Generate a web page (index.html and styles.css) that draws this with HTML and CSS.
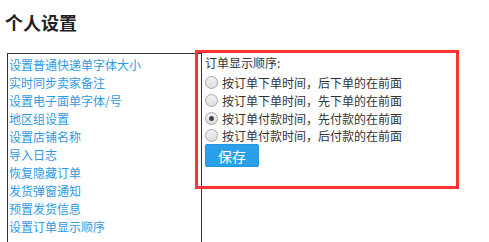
FILE: index.html
```html
<!DOCTYPE html>
<html lang="zh-CN">
<head>
    <meta charset="UTF-8">
    <title>个人设置</title>
    <link rel="stylesheet" href="styles.css">
</head>
<body>
    <div class="page">
        <h2 class="page-title">个人设置</h2>
        <div class="main">
            <!-- Settings menu -->
            <ul class="menu">
                <li><a href="#">设置普通快递单字体大小</a></li>
                <li><a href="#">实时同步卖家备注</a></li>
                <li><a href="#">设置电子面单字体/号</a></li>
                <li><a href="#">地区组设置</a></li>
                <li><a href="#">设置店铺名称</a></li>
                <li><a href="#">导入日志</a></li>
                <li><a href="#">恢复隐藏订单</a></li>
                <li><a href="#">发货弹窗通知</a></li>
                <li><a href="#">预置发货信息</a></li>
                <li><a href="#">设置订单显示顺序</a></li>
            </ul>

            <!-- Order display setting -->
            <div class="panel">
                <div class="panel-label">订单显示顺序:</div>
                <label class="option"><input type="radio" name="order">按订单下单时间，后下单的在前面</label>
                <label class="option"><input type="radio" name="order">按订单下单时间，先下单的在前面</label>
                <label class="option"><input type="radio" name="order" checked>按订单付款时间，先付款的在前面</label>
                <label class="option"><input type="radio" name="order">按订单付款时间，后付款的在前面</label>
                <button class="btn-save">保存</button>
            </div>
        </div>
        <div class="highlight"></div>
    </div>
</body>
</html>
```

FILE: styles.css
```css
body {
    margin: 0;
    background: #fff;
    font-family: "Microsoft YaHei", "Noto Sans CJK SC", "Liberation Sans", sans-serif;
    font-size: 12px;
    color: #333;
    overflow: hidden;
}

.page {
    position: relative;
    padding: 10px 5px 0;
}

.page-title {
    margin: 0 0 19px;
    font-size: 18px;
    line-height: 24px;
    font-weight: bold;
    color: #222;
}

.main {
    display: flex;
    align-items: flex-start;
}

/* Left menu */
.menu {
    list-style: none;
    margin: 0 0 0 2px;
    padding: 2px 0 0 1px;
    width: 192px;
    min-height: 200px;
    border: 1px solid #333;
}

.menu li {
    line-height: 18px;
}

.menu a {
    color: #2e9ae6;
    text-decoration: none;
}

/* Right panel */
.panel {
    display: flex;
    flex-direction: column;
    align-items: flex-start;
    padding: 1px 0 0 3px;
}

.panel-label {
    line-height: 18px;
}

.option {
    display: flex;
    align-items: center;
    height: 17.7px;
}

.option:first-of-type {
    margin-top: 2px;
}

.option input {
    appearance: none;
    -webkit-appearance: none;
    width: 13px;
    height: 13px;
    margin: 0 4px 0 0;
    border: 1px solid #a6a6a6;
    border-radius: 50%;
    background: linear-gradient(#f2f2f2, #dcdcdc);
    box-sizing: border-box;
    position: relative;
}

.option input:checked::after {
    content: '';
    position: absolute;
    top: 3px;
    left: 3px;
    width: 5px;
    height: 5px;
    border-radius: 50%;
    background: #444;
}

.btn-save {
    margin-top: -1px;
    width: 54px;
    height: 23px;
    border: 1px solid #2493e0;
    border-radius: 2px;
    background: #2aa0ea;
    color: #fff;
    font-family: inherit;
    font-size: 14px;
    cursor: pointer;
}

/* Red highlight frame over the panel */
.highlight {
    position: absolute;
    left: 195px;
    top: 50px;
    width: 264px;
    height: 139px;
    border: 3px solid #f33;
    box-sizing: border-box;
    pointer-events: none;
}
```
